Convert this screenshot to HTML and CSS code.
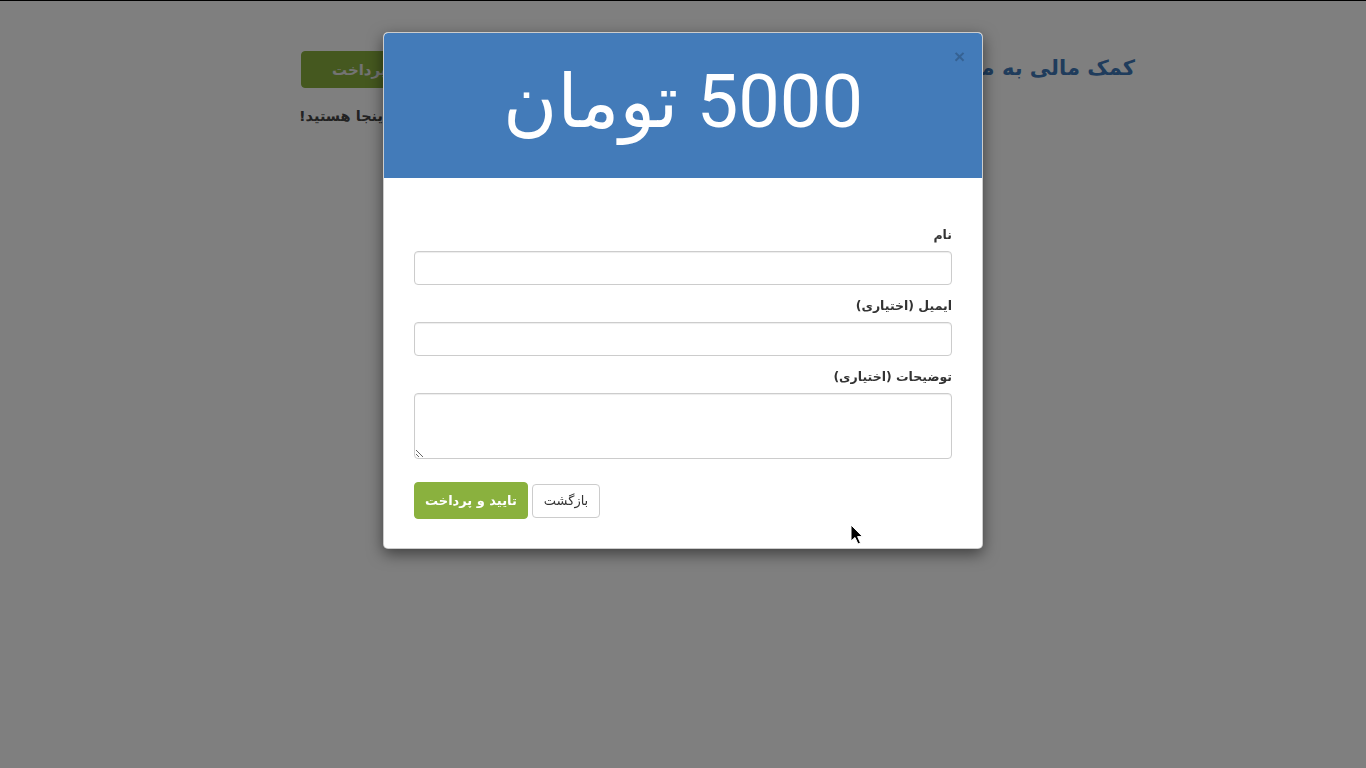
FILE: index.html
```html
<!DOCTYPE html>
<html lang="fa" dir="rtl">
<head>
<meta charset="utf-8">
<title>کمک مالی</title>
<link rel="stylesheet" href="styles.css">
</head>
<body>
<div class="page">
  <div class="top-row">
    <h2 class="page-title">کمک مالی به مرکز</h2>
    <button class="btn btn-green btn-big">کمک و پرداخت</button>
  </div>
  <p class="intro">از حمایت شما سپاسگزاریم، خوشحالیم که اینجا هستید!</p>
</div>

<div class="backdrop"></div>

<div class="modal">
  <div class="modal-header">
    <span class="close">×</span>
    <h1 class="amount">5000 تومان</h1>
  </div>
  <div class="modal-body">
    <div class="form-group">
      <label class="label">نام</label>
      <input class="field" type="text">
    </div>
    <div class="form-group">
      <label class="label">ایمیل (اختیاری)</label>
      <input class="field" type="text">
    </div>
    <div class="form-group">
      <label class="label">توضیحات (اختیاری)</label>
      <textarea class="field area"></textarea>
    </div>
    <div class="actions">
      <button class="btn btn-default">بازگشت</button>
      <button class="btn btn-green">تایید و پرداخت</button>
    </div>
  </div>
</div>

<svg class="cursor" width="14" height="22" viewBox="0 0 14 22">
  <path d="M1 1 L1 17 L5 13.5 L8 20 L10.5 19 L7.6 12.6 L12.5 12.6 Z" fill="#000" stroke="#fff" stroke-width="1"/>
</svg>
</body>
</html>
```

FILE: styles.css
```css
html {
  border-top: 1px solid #000;
}
body {
  margin: 0;
  background: #fff;
  font-family: "DejaVu Sans", sans-serif;
  color: #333;
  font-size: 13px;
  min-height: 767px;
}
.page {
  width: 836px;
  margin-right: 231px;
  padding-top: 50px;
}
.top-row {
  display: flex;
  justify-content: space-between;
  align-items: center;
  margin-left: 2px;
}
.page-title {
  margin: 0;
  font-size: 21px;
  font-weight: bold;
  color: #3f78b8;
  position: relative;
  top: -2px;
}
.intro {
  margin: 20px 0 0;
  text-align: left;
  font-weight: bold;
  font-size: 14.5px;
  color: #444;
}
.btn {
  font-family: "DejaVu Sans", sans-serif;
  font-size: 13px;
  border-radius: 4px;
  cursor: pointer;
}
.btn-green {
  background: #8ab13e;
  border: 1px solid #8ab13e;
  color: #fff;
  font-weight: bold;
  height: 37px;
  padding: 0 10px;
}
.btn-big {
  padding: 0 30px;
  font-size: 15px;
  width: 200px;
  text-align: left;
  color: #e6e6e6;
}
.btn-default {
  background: #fff;
  border: 1px solid #ccc;
  color: #333;
  height: 34px;
  padding: 0 11px;
}
.backdrop {
  position: fixed;
  inset: 0;
  background: rgba(0, 0, 0, 0.5);
}
.modal {
  position: absolute;
  top: 32px;
  left: 383px;
  width: 598px;
  background: #fff;
  border: 1px solid rgba(0, 0, 0, 0.2);
  border-radius: 5px;
  box-shadow: 0 5px 15px rgba(0, 0, 0, 0.5);
  overflow: hidden;
}
.modal-header {
  position: relative;
  background: #437bb9;
  height: 145px;
  display: flex;
  align-items: center;
  justify-content: center;
  border-radius: 4px 4px 0 0;
}
.amount {
  margin: 0;
  color: #fff;
  font-family: Roboto, "DejaVu Sans", sans-serif;
  font-weight: normal;
  font-size: 74px;
  line-height: 1;
  position: relative;
  top: -4px;
}
.close {
  position: absolute;
  top: 14px;
  left: 570px;
  font-family: "Liberation Sans", sans-serif;
  font-size: 19px;
  font-weight: bold;
  color: #000;
  opacity: 0.2;
  line-height: 1;
}
.modal-body {
  padding: 47px 30px 29px;
}
.form-group {
  margin-bottom: 11px;
}
.label {
  display: block;
  font-weight: bold;
  font-size: 12.5px;
  line-height: 20px;
  margin-bottom: 6px;
  color: #333;
}
.field {
  display: block;
  box-sizing: border-box;
  width: 100%;
  height: 34px;
  border: 1px solid #ccc;
  border-radius: 4px;
  box-shadow: inset 0 1px 1px rgba(0, 0, 0, 0.075);
  font-family: "DejaVu Sans", sans-serif;
  margin: 0;
}
.area {
  height: 66px;
}
.actions {
  display: flex;
  justify-content: flex-end;
  align-items: center;
  gap: 4px;
  margin-top: 23px;
}
.cursor {
  position: fixed;
  top: 524px;
  left: 850px;
}
```
